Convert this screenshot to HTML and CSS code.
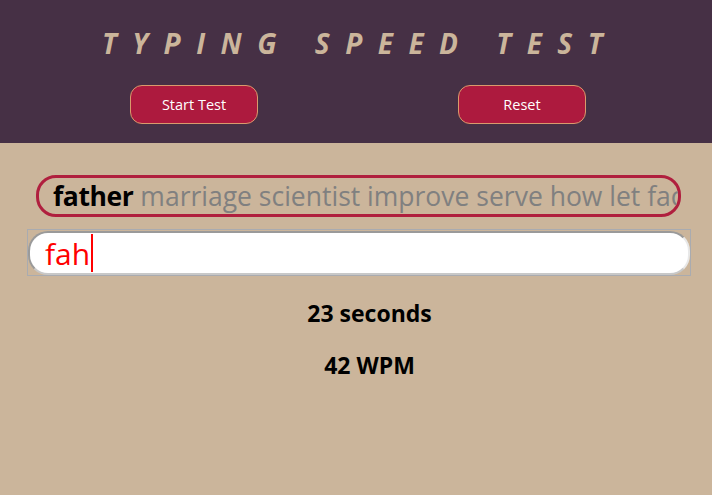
FILE: index.html
```html
<!DOCTYPE html>
<html>
<head>
<meta charset="utf-8">
<link rel="stylesheet" href="styles.css">
</head>
<body>
<header class="header">
  <h1 class="title">TYPING SPEED TEST</h1>
  <div class="buttons">
    <button class="btn">Start Test</button>
    <button class="btn">Reset</button>
  </div>
</header>
<main class="main">
  <div class="words"><span class="current">father</span> marriage scientist improve serve how let face result</div>
  <div class="input-wrap"><div class="input"><span class="typed">fah</span><span class="caret"></span></div></div>
  <div class="stat">23 seconds</div>
  <div class="stat">42 WPM</div>
</main>
</body>
</html>
```
FILE: styles.css
```css
html, body { margin: 0; padding: 0; }
body {
  background: #cbb59b;
  font-family: "Open Sans", "Noto Sans", sans-serif;
  height: 495px;
  overflow: hidden;
}
.header {
  background: #463045;
  height: 143px;
  box-sizing: border-box;
  padding-top: 24px;
}
.title {
  margin: 0;
  text-align: center;
  color: #cbb59b;
  font-size: 28px;
  font-weight: 700;
  font-style: italic;
  letter-spacing: 15.5px;
  line-height: 38px;
  padding-left: 8px;
}
.buttons {
  display: flex;
  justify-content: center;
  gap: 200px;
  margin-top: 23px;
  padding-left: 4px;
}
.btn {
  width: 128px;
  height: 39px;
  background: #ad1a3e;
  color: #fff;
  border: 1px solid #d99a6c;
  border-radius: 12px;
  font-family: "Open Sans", sans-serif;
  font-size: 14.5px;
}
.main {
  padding: 32px 0 0 27px;
}
.words {
  margin-left: 9px;
  width: 625px;
  height: 36px;
  border: 3px solid #b01f3e;
  border-radius: 20px;
  overflow: hidden;
  white-space: nowrap;
  padding-left: 14px;
  font-size: 26.5px;
  line-height: 36px;
  color: #808080;
}
.current { color: #000; font-weight: 700; letter-spacing: -0.4px; }
.input-wrap {
  margin-top: 12px;
  width: 662px;
  border: 1px solid #a9abb0;
  padding: 1px 0 0 0;
}
.input {
  height: 44px;
  background: #fff;
  border-radius: 20px;
  border: 2px solid;
  border-color: #9a9a9a #e8e8e8 #c8c8c8 #9a9a9a;
  box-sizing: border-box;
  display: flex;
  align-items: center;
  padding-left: 15px;
  font-size: 30px;
}
.typed { color: #ff0000; }
.caret { flex: none; width: 1.5px; height: 38px; background: #ff0000; margin-left: 1px; }
.stat {
  text-align: center;
  font-weight: 700;
  font-size: 23px;
  margin-top: 22px;
  line-height: 30px;
}
.stat + .stat { margin-top: 22px; }
```
